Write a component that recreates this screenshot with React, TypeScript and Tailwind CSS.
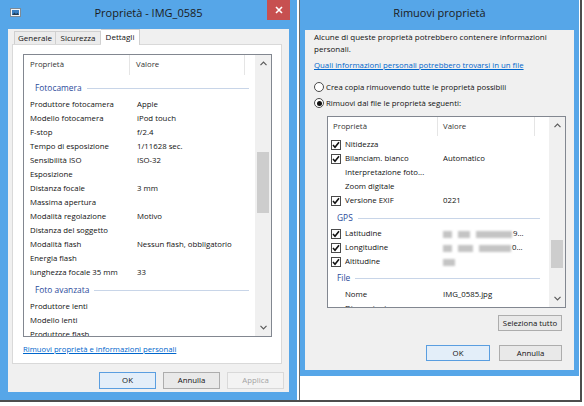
import React from 'react';

type Row = { label: string; value?: React.ReactNode; checked?: boolean };

const Chevron = ({ up }: { up?: boolean }) => (
  <svg width="7" height="5" viewBox="0 0 7 5">
    <polyline
      points={up ? '0.5,4.2 3.5,1.2 6.5,4.2' : '0.5,0.8 3.5,3.8 6.5,0.8'}
      fill="none"
      stroke="#5a5a5a"
      strokeWidth="1.2"
    />
  </svg>
);

const ScrollBar = ({ thumb }: { thumb: string }) => (
  <div className="w-[16px] flex flex-col bg-[#f0f0f0]">
    <div className="h-[17px] flex items-center justify-center">
      <Chevron up />
    </div>
    <div className="flex-1 px-[2px]">
      <div className={`${thumb} bg-[#cdcdcd]`} />
    </div>
    <div className="h-[17px] flex items-center justify-center">
      <Chevron />
    </div>
  </div>
);

const CheckBox = () => (
  <span className="w-[10px] h-[10px] border border-[#4a4a4a] bg-white flex items-center justify-center shrink-0">
    <svg width="8" height="8" viewBox="0 0 8 8">
      <polyline points="1,4 3,6.2 7,1.2" fill="none" stroke="#111" strokeWidth="1.6" />
    </svg>
  </span>
);

const Group = ({ title, pad, h }: { title: string; pad: string; h: string }) => (
  <div className={`${h} ${pad} flex items-center gap-[5px] text-[8.4px] text-[#2b4b9b]`}>
    <span>{title}</span>
    <span className="flex-1 h-px bg-[#c8d5e8]" />
  </div>
);

const Button = ({ label, w, h, primary, disabled }: { label: string; w: string; h: string; primary?: boolean; disabled?: boolean }) => (
  <div
    className={`${w} ${h} flex items-center justify-center border whitespace-nowrap text-[7.8px] ${
      primary
        ? 'border-[#5a9ee0] bg-[#e3eef9] text-[#111]'
        : disabled
        ? 'border-[#d9d9d9] bg-[#f3f3f3] text-[#a3a3a3]'
        : 'border-[#adadad] bg-[#e9e9e9] text-[#111]'
    }`}
  >
    {label}
  </div>
);

// valori GPS sfocati nello screenshot
const Blur = ({ widths, tail }: { widths: string[]; tail?: string }) => (
  <span className="flex items-center gap-[6px]">
    {widths.map((w, i) => (
      <span key={i} className={`${w} h-[7px] bg-[#c4c4c4] blur-[1px]`} />
    ))}
    {tail && <span className="ml-[-5px]">{tail}</span>}
  </span>
);

const WindowIcon = () => (
  <svg width="11" height="9" viewBox="0 0 11 9">
    <rect x="0.5" y="0.5" width="10" height="8" fill="#f2f4f6" stroke="#7d8a96" />
    <rect x="2" y="2" width="7" height="5" fill="#3a7fc2" />
    <path d="M2 7 L4.5 4.5 L6 6 L7.5 4.8 L9 7 Z" fill="#1f3b55" />
  </svg>
);

const leftRows: Row[] = [
  { label: 'Produttore fotocamera', value: 'Apple' },
  { label: 'Modello fotocamera', value: 'iPod touch' },
  { label: 'F-stop', value: 'f/2.4' },
  { label: 'Tempo di esposizione', value: '1/11628 sec.' },
  { label: 'Sensibilità ISO', value: 'ISO-32' },
  { label: 'Esposizione' },
  { label: 'Distanza focale', value: '3 mm' },
  { label: 'Massima apertura' },
  { label: 'Modalità regolazione', value: 'Motivo' },
  { label: 'Distanza del soggetto' },
  { label: 'Modalità flash', value: 'Nessun flash, obbligatorio' },
  { label: 'Energia flash' },
  { label: 'lunghezza focale 35 mm', value: '33' },
];

const LeftRow = ({ label, value }: Row) => (
  <div className="h-[14px] flex items-center shrink-0">
    <span className="w-[113px] pl-[6px] shrink-0 whitespace-nowrap">{label}</span>
    <span className="whitespace-nowrap">{value}</span>
  </div>
);

const RightRow = ({ label, value, checked }: Row) => (
  <div className="h-[14px] flex items-center shrink-0">
    <span className="w-[115px] pl-[3px] shrink-0 flex items-center gap-[4px] whitespace-nowrap">
      {checked ? <CheckBox /> : <span className="w-[10px] shrink-0" />}
      {label}
    </span>
    <span className="whitespace-nowrap flex items-center">{value}</span>
  </div>
);

const LeftWindow = () => (
  <div className="w-[297px] h-[400px] bg-[#56a6e8] flex flex-col shrink-0">
    <div className="h-[29px] grid grid-cols-[1fr_auto_1fr] items-start shrink-0">
      <div className="pl-[10px] pt-[8px]">
        <WindowIcon />
      </div>
      <div className="pt-[5px] text-[11px] text-[#1b1b1b]">Proprietà - IMG_0585</div>
      <div className="flex justify-end pr-[7px]">
        <div className="w-[23px] h-[20px] bg-[#c75050] flex items-center justify-center">
          <svg width="8" height="8" viewBox="0 0 8 8">
            <path d="M1 1 L7 7 M7 1 L1 7" stroke="#fff" strokeWidth="1.6" />
          </svg>
        </div>
      </div>
    </div>
    <div className="mx-[8px] mb-[8px] flex-1 bg-[#f0f0f0] flex flex-col">
      <div className="h-[15px] pl-[6px] flex items-end text-[8px] text-[#111] shrink-0">
        <div className="w-[42px] h-[13px] border border-b-0 border-[#d0d0d0] bg-[#ececec] flex items-center justify-center">
          Generale
        </div>
        <div className="w-[45px] h-[13px] border border-b-0 border-l-0 border-[#d0d0d0] bg-[#ececec] flex items-center justify-center">
          Sicurezza
        </div>
        <div className="w-[39px] h-[16px] mb-[-1px] border border-b-0 border-l-0 border-[#d0d0d0] bg-white flex items-start justify-center pt-[1px] relative z-10">
          Dettagli
        </div>
      </div>
      <div className="ml-[4px] w-[270px] h-[320px] bg-white border border-[#d9d9d9] pt-[9px] pl-[10px] flex flex-col shrink-0">
        <div className="w-[249px] h-[283px] border border-[#828790] flex text-[7.8px] text-[#111]">
          <div className="flex-1 flex flex-col overflow-hidden">
            <div className="h-[20px] flex shrink-0 text-[#333]">
              <div className="w-[106px] pl-[6px] flex items-center border-r border-[#e5e5e5]">Proprietà</div>
              <div className="w-[115px] pl-[6px] flex items-center border-r border-[#e5e5e5]">Valore</div>
              <div className="flex-1" />
            </div>
            <div className="h-[3px] shrink-0" />
            <Group title="Fotocamera" pad="pl-[11px] pr-[6px]" h="h-[20px] shrink-0" />
            {leftRows.map((r) => (
              <LeftRow key={r.label} {...r} />
            ))}
            <Group title="Foto avanzata" pad="pl-[11px] pr-[6px]" h="h-[20px] shrink-0" />
            <LeftRow label="Produttore lenti" />
            <LeftRow label="Modello lenti" />
            <LeftRow label="Produttore flash" />
          </div>
          <ScrollBar thumb="mt-[80px] h-[61px]" />
        </div>
        <div className="mt-[6px] text-[7.7px] text-[#0066cc] underline leading-[12px]">
          Rimuovi proprietà e informazioni personali
        </div>
      </div>
      <div className="mt-[8px] pr-[5px] flex justify-end gap-[7px]">
        <Button label="OK" w="w-[57px]" h="h-[17px]" primary />
        <Button label="Annulla" w="w-[57px]" h="h-[17px]" />
        <Button label="Applica" w="w-[57px]" h="h-[17px]" disabled />
      </div>
    </div>
  </div>
);

const RightWindow = () => (
  <div className="w-[279px] h-[376px] bg-[#56a6e8] flex flex-col shrink-0">
    <div className="h-[30px] flex justify-center items-start pt-[5px] text-[11px] text-[#1b1b1b] shrink-0">
      Rimuovi proprietà
    </div>
    <div className="mx-[5px] mb-[6px] flex-1 bg-[#f0f0f0] flex flex-col text-[7.8px] text-[#111] leading-[12px]">
      <div className="pl-[9px] pt-[1px] pr-[10px] text-[8px]">
        Alcune di queste proprietà potrebbero contenere informazioni personali.
      </div>
      <div className="pl-[9px] mt-[4px] text-[#0066cc] underline">
        Quali informazioni personali potrebbero trovarsi in un file
      </div>
      <div className="pl-[9px] mt-[9px] h-[14px] flex items-center gap-[2px]">
        <span className="w-[10px] h-[10px] rounded-full border border-[#4a4a4a] bg-white" />
        Crea copia rimuovendo tutte le proprietà possibili
      </div>
      <div className="pl-[9px] mt-[2px] h-[14px] flex items-center gap-[2px]">
        <span className="w-[10px] h-[10px] rounded-full border border-[#4a4a4a] bg-white flex items-center justify-center">
          <span className="w-[5px] h-[5px] rounded-full bg-[#111]" />
        </span>
        Rimuovi dal file le proprietà seguenti:
      </div>
      <div className="ml-[22px] mt-[6px] w-[239px] h-[192px] border border-[#828790] bg-white flex leading-normal">
        <div className="flex-1 flex flex-col overflow-hidden">
          <div className="h-[19px] flex shrink-0 text-[#333]">
            <div className="w-[110px] pl-[5px] flex items-center border-r border-[#e5e5e5]">Proprietà</div>
            <div className="w-[97px] pl-[5px] flex items-center border-r border-[#e5e5e5]">Valore</div>
            <div className="flex-1" />
          </div>
          <div className="h-[2px] shrink-0" />
          <RightRow label="Nitidezza" checked />
          <RightRow label="Bilanciam. bianco" value="Automatico" checked />
          <RightRow label="Interpretazione foto..." />
          <RightRow label="Zoom digitale" />
          <RightRow label="Versione EXIF" value="0221" checked />
          <Group title="GPS" pad="pl-[9px] pr-[9px] pt-[2px]" h="h-[19px] shrink-0" />
          <RightRow label="Latitudine" value={<Blur widths={['w-[9px]', 'w-[12px]', 'w-[36px]']} tail="9..." />} checked />
          <RightRow label="Longitudine" value={<Blur widths={['w-[9px]', 'w-[15px]', 'w-[32px]']} tail="0..." />} checked />
          <RightRow label="Altitudine" value={<Blur widths={['w-[12px]']} />} checked />
          <Group title="File" pad="pl-[9px] pr-[9px]" h="h-[19px] shrink-0" />
          <RightRow label="Nome" value="IMG_0585.jpg" />
          <RightRow label="Dimensioni" />
        </div>
        <ScrollBar thumb="mt-[106px] h-[28px]" />
      </div>
      <div className="mt-[7px] pr-[12px] flex justify-end">
        <Button label="Seleziona tutto" w="w-[64px]" h="h-[16px]" />
      </div>
      <div className="mt-[14px] pr-[12px] flex justify-end gap-[9px]">
        <Button label="OK" w="w-[64px]" h="h-[16px]" primary />
        <Button label="Annulla" w="w-[63px]" h="h-[16px]" />
      </div>
    </div>
  </div>
);

export default function App() {
  return (
    <div className="w-[584px] h-[406px] bg-white font-['Open_Sans','Noto_Sans',sans-serif]">
      <div className="w-[582px] h-[402px] border-r-2 border-b-2 border-[#4d4d4d] flex bg-white">
        <LeftWindow />
        <div className="w-[3px] border-r border-[#6b6b6b] bg-white shrink-0" />
        <div className="flex-1 flex flex-col">
          <RightWindow />
        </div>
      </div>
    </div>
  );
}
